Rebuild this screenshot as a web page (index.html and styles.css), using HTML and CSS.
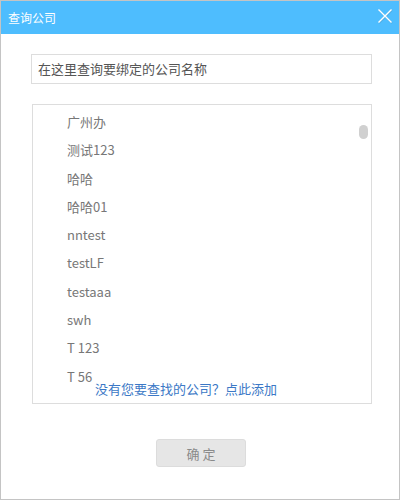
FILE: index.html
```
<!DOCTYPE html>
<html lang="zh">
<head>
<meta charset="utf-8">
<title>查询公司</title>
<link rel="stylesheet" href="styles.css">
</head>
<body>
<div class="dialog">
  <div class="header">
    <span class="title">查询公司</span>
    <svg class="close" width="16" height="16" viewBox="0 0 16 16" aria-hidden="true">
      <path d="M1.5 1.5 L14.5 14.5 M14.5 1.5 L1.5 14.5" stroke="#5a8fb0" stroke-opacity="0.35" stroke-width="1.6" fill="none" transform="translate(0.6 0.8)"/>
      <path d="M1.5 1.5 L14.5 14.5 M14.5 1.5 L1.5 14.5" stroke="#ffffff" stroke-width="1.4" fill="none"/>
    </svg>
  </div>
  <div class="content">
    <div class="search">在这里查询要绑定的公司名称</div>
    <div class="listbox">
      <ul class="list">
        <li>广州办</li>
        <li>测试123</li>
        <li>哈哈</li>
        <li>哈哈01</li>
        <li>nntest</li>
        <li>testLF</li>
        <li>testaaa</li>
        <li>swh</li>
        <li>T 123</li>
        <li>T 56</li>
      </ul>
      <span class="thumb"></span>
      <a class="addlink" href="#">没有您要查找的公司？点此添加</a>
    </div>
    <div class="actions">
      <button class="ok" type="button">确 定</button>
    </div>
  </div>
</div>
</body>
</html>
```
FILE: styles.css
```
html, body {
  margin: 0;
  padding: 0;
  background: #ffffff;
}
body {
  font-family: "Noto Sans CJK SC", "Noto Sans", sans-serif;
}
.dialog {
  box-sizing: border-box;
  width: 400px;
  height: 500px;
  border: 1px solid #c4c4c4;
  background: #ffffff;
  display: flex;
  flex-direction: column;
}
.header {
  height: 33px;
  background: #4ebdfe;
  display: flex;
  align-items: center;
  justify-content: space-between;
  padding: 0 6px 0 7px;
}
.title {
  color: #ffffff;
  font-size: 12px;
  line-height: 1;
}
.close {
  display: block;
  margin-top: -3px;
}
.content {
  padding: 20px 27px 0 30px;
  display: flex;
  flex-direction: column;
}
.search {
  box-sizing: border-box;
  height: 30px;
  width: 341px;
  border: 1px solid #dddddd;
  padding: 0 6px;
  font-size: 13px;
  line-height: 28px;
  color: #555555;
}
.listbox {
  position: relative;
  box-sizing: border-box;
  margin-top: 20px;
  width: 340px;
  height: 300px;
  border: 1px solid #dddddd;
  overflow: hidden;
  margin-left: 1px;
}
.list {
  list-style: none;
  margin: 0;
  padding: 3px 0 0 34px;
}
.list li {
  height: 28.3px;
  line-height: 28px;
  font-size: 13px;
  color: #777777;
}
.thumb {
  position: absolute;
  right: 3px;
  top: 20px;
  width: 9px;
  height: 14px;
  border-radius: 5px;
  background: #d0d0d0;
}
.addlink {
  position: absolute;
  left: 62px;
  top: 275px;
  font-size: 13px;
  line-height: 18px;
  color: #3b78c6;
  text-decoration: none;
}
.actions {
  display: flex;
  justify-content: center;
  margin-top: 35px;
  margin-left: -1px;
}
.ok {
  box-sizing: border-box;
  width: 90px;
  height: 28px;
  border: 1px solid #dcdcdc;
  border-radius: 3px;
  background: #e6e6e6;
  color: #8a8a8a;
  font-family: "Noto Sans CJK SC", "Noto Sans", sans-serif;
  font-size: 13px;
  padding: 0;
}
```
